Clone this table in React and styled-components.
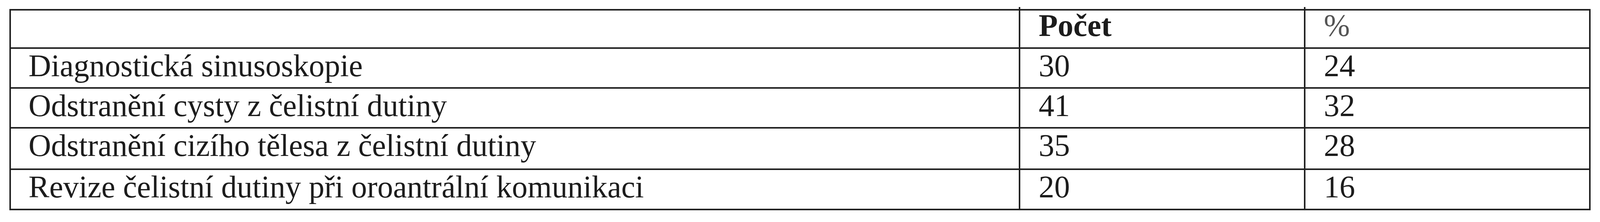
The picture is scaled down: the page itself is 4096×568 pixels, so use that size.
import React from "react";
import styled, { createGlobalStyle } from "styled-components";

const GlobalStyle = createGlobalStyle`
  html, body {
    margin: 0;
    padding: 0;
    background: #ffffff;
  }
  body {
    font-family: "Liberation Serif", "Times New Roman", serif;
    color: #1c1c1c;
  }
`;

const Page = styled.div`
  padding: 23px 24px 0 24px;
  background: #ffffff;
`;

const Table = styled.div`
  width: 4048px;
  box-sizing: border-box;
  border: 4px solid #222222;
  display: flex;
  flex-direction: column;
`;

const Row = styled.div`
  display: grid;
  grid-template-columns: 2580px 730px 730px;
  height: ${(p) => p.$h}px;
  border-top: ${(p) => (p.$first ? "none" : "4px solid #222222")};
`;

const Cell = styled.div`
  position: relative;
  box-sizing: border-box;
  padding-left: ${(p) => (p.$lead ? 45 : 47)}px;
  padding-top: ${(p) => (p.$head ? 0 : 5)}px;
  border-left: ${(p) => (p.$lead ? "none" : "4px solid #222222")};
  font-size: 80px;
  line-height: 76px;
  font-weight: ${(p) => (p.$bold ? 700 : 400)};
  color: ${(p) => (p.$faint ? "#555555" : "#1c1c1c")};
  white-space: nowrap;

  ${(p) =>
    p.$head && !p.$lead
      ? `
    &::before {
      content: "";
      position: absolute;
      left: -4px;
      top: -9px;
      width: 4px;
      height: 5px;
      background: #222222;
    }
  `
      : ""}
`;

const rows = [
  { label: "Diagnostická sinusoskopie", count: "30", pct: "24", h: 98 },
  { label: "Odstranění cysty z čelistní dutiny", count: "41", pct: "32", h: 98 },
  { label: "Odstranění cizího tělesa z čelistní dutiny", count: "35", pct: "28", h: 102 },
  { label: "Revize čelistní dutiny při oroantrální komunikaci", count: "20", pct: "16", h: 99 },
];

export default function App() {
  return (
    <>
      <GlobalStyle />
      <Page>
        <Table>
          <Row $first $h={94}>
            <Cell $lead $head />
            <Cell $head $bold>Počet</Cell>
            <Cell $head $faint>%</Cell>
          </Row>
          {rows.map((r) => (
            <Row key={r.label} $h={r.h}>
              <Cell $lead>{r.label}</Cell>
              <Cell>{r.count}</Cell>
              <Cell>{r.pct}</Cell>
            </Row>
          ))}
        </Table>
      </Page>
    </>
  );
}
